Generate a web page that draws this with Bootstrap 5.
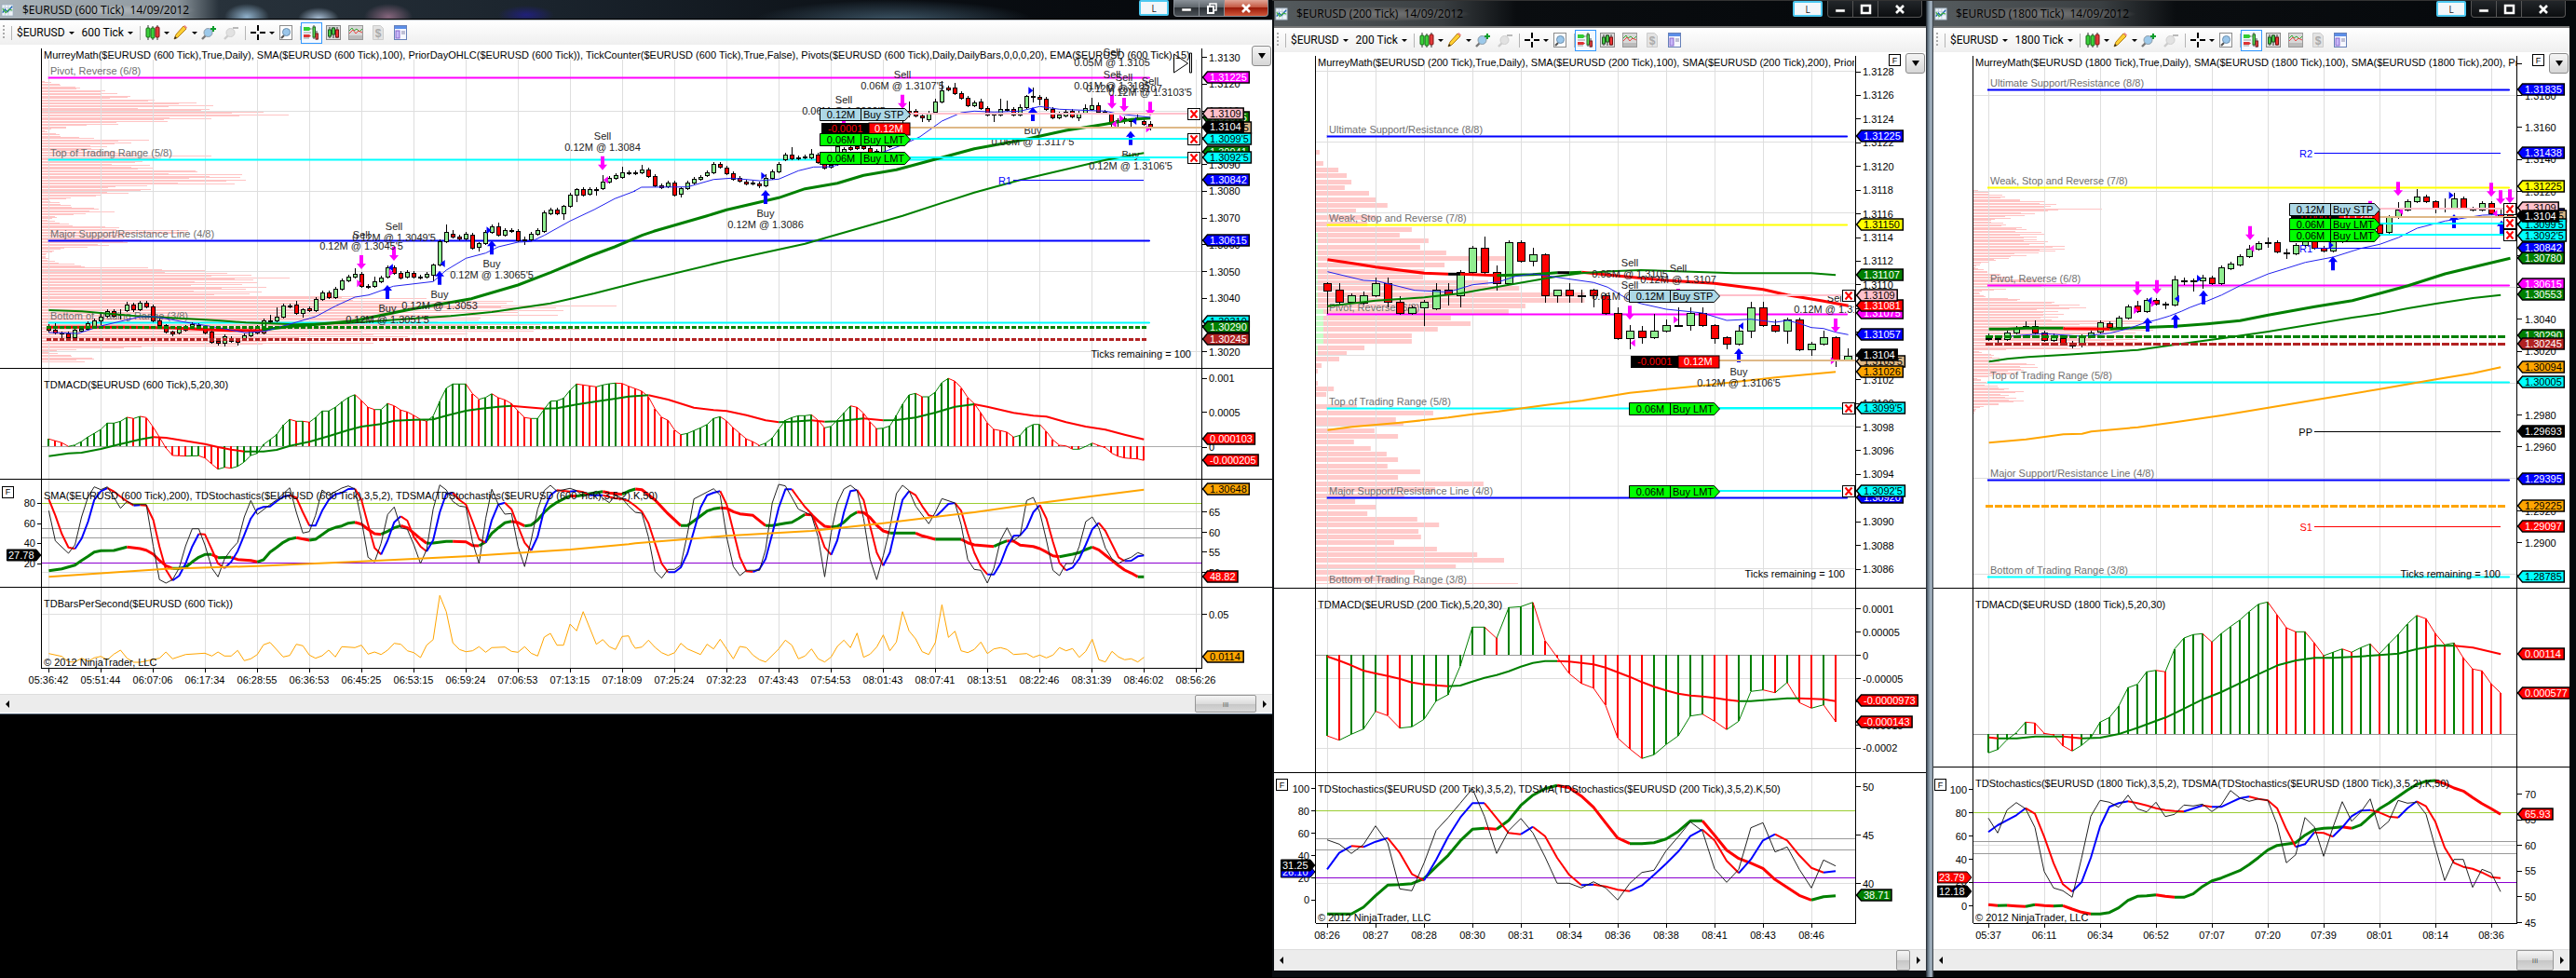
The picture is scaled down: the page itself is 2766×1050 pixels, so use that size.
<!DOCTYPE html>
<html lang="en">
<head>
<meta charset="utf-8">
<meta name="viewport" content="width=device-width, initial-scale=1">
<title>$EURUSD charts</title>
<link rel="stylesheet" href="https://cdn.jsdelivr.net/npm/bootstrap@5.3.0/dist/css/bootstrap.min.css">
<script src="https://cdn.jsdelivr.net/npm/bootstrap@5.3.0/dist/js/bootstrap.bundle.min.js"></script>
<style>
body{background:#000;font-family:"Open Sans",sans-serif;font-size:12px;line-height:16px;color:#000}
.desk{grid-template-columns:1366fr 702fr 698fr}
.win{min-width:0;background:#000}
.win-b{padding:0 0 7px 2px;border-top:1px solid #333;background:#0b0e11}
.win-c{padding:0 7px 7px 8px;border-top:1px solid #333;background:linear-gradient(90deg,#1b2025 0,#5f6f7d 2px,#8fa0ad 4px,#aebccb 6px,#20262b 8px,#05080a 9px,#05080a 100%)}
.titlebar{height:29px;background:linear-gradient(90deg,#555b5e 0,#3a3f42 180px,#0a0d10 260px,#05080b 100%);border-bottom:2px solid #777}
.win-a .titlebar{height:22px;border-bottom:1px solid #b5bbc2;box-shadow:inset 0 -1px #000;background:
 radial-gradient(ellipse 24px 14px at 265px 18px,#8fb0ca,transparent),
 radial-gradient(ellipse 22px 12px at 342px 20px,#a9bfd6,transparent),
 radial-gradient(ellipse 26px 14px at 417px 18px,#85657c,transparent),
 radial-gradient(ellipse 30px 10px at 565px 16px,#20207a,transparent),
 radial-gradient(ellipse 150px 22px at 960px 22px,#3d5566,transparent),
 linear-gradient(90deg,#aab4bb 0,#8d979e 190px,#28323b 235px,#1a232c 600px,#0a0e13 1000px,#05070a 100%)}
.caption{font-size:12px;padding:0 8px;white-space:pre;background:radial-gradient(closest-side,rgba(190,195,198,.75),rgba(150,155,158,.45) 75%,transparent)}
.win-b .caption,.win-c .caption{background:radial-gradient(closest-side,rgba(125,125,125,.9),rgba(95,95,95,.7) 75%,transparent)}
.ctl{border:1px solid #8a9097;border-top:0;height:18px;padding:0;display:flex;align-items:center;justify-content:center;background:linear-gradient(#8b9299,#5c6369 48%,#2b3035 50%,#4a5056);color:#fff}
.win-b .ctl,.win-c .ctl{background:linear-gradient(#22262a,#0c0e10);border-color:#555}
.ctl svg{width:16px;height:12px}
.ctl-min{width:28px;border-radius:0 0 0 4px}
.ctl-max{width:27px;border-left:0}
.ctl-x{width:47px;border-left:0;border-radius:0 0 4px 0}
.win-a .ctl-x{background:linear-gradient(#e0a596,#c4553f 48%,#9b1c0a 50%,#d0563a)}
.win .titlebar .ctl-l{width:32px;height:17px;background:#f3f7fa;border:2px solid #4cc8f0;border-radius:2px;color:#222;font-size:10px;margin-right:5px}
.toolbar{height:26px;background:linear-gradient(#fff,#efefef);padding-left:3px}
.toolbar button{border:0;background:none;padding:0;display:flex;align-items:center;height:22px;color:#000;font-size:12px;white-space:nowrap;font-family:Roboto,"Open Sans",sans-serif}
.toolbar svg.ico{width:16px;height:16px;display:block}
.toolbar .caret{width:0;height:0;border:3px solid transparent;border-top-color:#000;border-bottom:0;margin:1px 0 0 4px}
.toolbar .rule{width:1px;height:15px;background:#b5b5b5;margin:0 5px 0 7px}
.toolbar .grip{width:2px;height:16px;background:repeating-linear-gradient(#aaa 0 2px,transparent 2px 4px)}
.toolbar .picked{border:1px solid #3399ff;background:#f4f9ff;width:23px;height:23px;justify-content:center}
.chart{background:#fff;position:relative}
.chart svg.plot{display:block;width:100%;height:auto;font-family:"Liberation Sans",Arial,sans-serif;font-size:11px}
.chart-menu{position:absolute;top:1px;right:1px;width:21px;height:22px;border:1px solid #8a8a8a;border-radius:3px;background:linear-gradient(#f4f4f4,#d6d6d6);padding:0;display:flex;align-items:center;justify-content:center}
.chart-menu i{border:4px solid transparent;border-top:6px solid #000;border-bottom:0}
.fix-axis{position:absolute;width:13px;height:13px;border:1px solid #000;background:#fff;padding:0;font:9px/10px "Liberation Sans",Arial,sans-serif;color:#000}
.fix-a{top:68%;left:2px}
.fix-top{top:2px;right:27px}
.fix-b{top:81%;left:2px}
.fix-c{top:81%;left:1px}
.scroller{height:23px;background:#ececec;border-top:1px solid #ddd}
.win-a .scroller{height:21px;border-bottom:1px solid #fff}
.scroller button{border:0;background:none;padding:0}
.scroller .arrow{width:17px;color:#333}
.scroller .arrow svg{width:5px;height:8px;display:block;margin:0 auto}
.scroller .thumb{border:1px solid #979797;border-radius:2px;background:linear-gradient(#f5f5f5,#dcdcdc 50%,#c6c6c6 52%,#d9d9d9);color:#555;font-size:8px;line-height:10px}
.thumb-wide{width:66px}.thumb-mid{width:40px}.thumb-slim{width:15px}
.foot-edge{height:2px;background:#000;border-top:1px solid #5d6f82}
</style>
</head>
<body>
<svg width="0" height="0" class="position-absolute" aria-hidden="true">
 <defs>
  <symbol id="i-app" viewBox="0 0 16 16"><rect x="1" y="1" width="14" height="14" fill="#eef3f8" stroke="#9ab"/><path d="M1 5h14M1 9h14M5 1v14M9 1v14" stroke="#bccbd8"/><path d="M2 11l3-4 3 3 6-7" fill="none" stroke="#1c62b5" stroke-width="1.6"/><path d="M2 6l4 5 4-4 4 1" fill="none" stroke="#3fae3f" stroke-width="1.4"/></symbol>
  <symbol id="i-candles" viewBox="0 0 16 16"><path d="M3 0v16M8 1v15M13 0v16" stroke="#333"/><rect x="1" y="3" width="4" height="10" rx="1" fill="#3bd13b" stroke="#176b17"/><rect x="6" y="3" width="4" height="11" rx="1" fill="#3bd13b" stroke="#176b17"/><rect x="11" y="2" width="4" height="11" rx="1" fill="#e23a3a" stroke="#7d1515"/></symbol>
  <symbol id="i-pencil" viewBox="0 0 16 16"><path d="M1 15l2-5 8-9 3 3-9 9z" fill="#ffcf33" stroke="#b27c12"/><path d="M11 1l3 3 1-1.500-2.500-2.500z" fill="#e88"/><path d="M1 15l1-3 2 2z" fill="#222"/></symbol>
  <symbol id="i-zin" viewBox="0 0 16 16"><path d="M1 15l4-4" stroke="#777" stroke-width="2.400"/><circle cx="7.500" cy="8" r="4.500" fill="#9cc9ea" stroke="#8b9aa6"/><path d="M10 4h6M13 1v6" stroke="#0a9c2a" stroke-width="2"/></symbol>
  <symbol id="i-zout" viewBox="0 0 16 16"><path d="M1 15l4-4" stroke="#ccc" stroke-width="2.400"/><circle cx="7.500" cy="8" r="4.500" fill="#e2e2e2" stroke="#cfcfcf"/><path d="M10 3h6" stroke="#b9b9b9" stroke-width="2"/></symbol>
  <symbol id="i-cross" viewBox="0 0 16 16"><path d="M8 0v6M8 10v6M0 8h6M10 8h6" stroke="#000" stroke-width="2"/></symbol>
  <symbol id="i-lens" viewBox="0 0 16 16"><rect x="1.500" y=".5" width="13" height="15" fill="#fdfdfd" stroke="#8c8c8c"/><path d="M3 14l3-3" stroke="#555" stroke-width="2.200"/><circle cx="8.500" cy="7.500" r="4" fill="#9ac6ea" stroke="#6b8fae"/></symbol>
  <symbol id="i-trader" viewBox="0 0 16 16"><path d="M0 2h6l2 2-2 2H0z" fill="#3c3"/><path d="M0 10h6l2 1.500-2 1.500H0z" fill="#d33"/><path d="M0 8h8M0 14h6M7 4h3" stroke="#999"/><path d="M11 0v15M14 6v10" stroke="#444"/><rect x="10" y="2" width="2.500" height="11" fill="#5d5" stroke="#262"/><rect x="13" y="9" width="2.500" height="6" fill="#e44" stroke="#722"/></symbol>
  <symbol id="i-style" viewBox="0 0 16 16"><rect x=".5" y=".5" width="15" height="15" fill="#ddd" stroke="#888"/><path d="M4 2v12M8 2v12M12 2v12" stroke="#333"/><rect x="2.500" y="5" width="3" height="7" fill="#4c4" stroke="#252"/><rect x="6.500" y="3" width="3" height="7" fill="#4c4" stroke="#252"/><rect x="10.500" y="5" width="3" height="8" fill="#e33" stroke="#711"/></symbol>
  <symbol id="i-ind" viewBox="0 0 16 16"><rect x=".5" y=".5" width="15" height="15" fill="#d8d8d8" stroke="#999"/><path d="M1 6l3-3 2 3 3-2 3 3 3-3" fill="none" stroke="#3a3"/><path d="M1 9l4-4 3 4 3-3 4 2" fill="none" stroke="#e44"/><path d="M1 11h14v4H1z" fill="#bbb"/></symbol>
  <symbol id="i-doc" viewBox="0 0 16 16"><path d="M2.500.5h8l3 3v12h-11z" fill="#e3e3e3" stroke="#ccc"/><text x="8" y="13" font-size="12" font-weight="700" text-anchor="middle" fill="#aaa" font-family="Liberation Sans">$</text></symbol>
  <symbol id="i-props" viewBox="0 0 16 16"><rect x="1.500" y=".5" width="13" height="15" fill="#f6f8ff" stroke="#6680b8"/><rect x="2" y="1" width="12" height="3" fill="#5c8ee8"/><rect x="3" y="6" width="4" height="8" fill="#c8b8f8" stroke="#86c"/><path d="M9 7h4M9 9h4" stroke="#88a"/></symbol>
  <symbol id="i-min" viewBox="0 0 16 12"><rect x="3" y="6" width="10" height="3" fill="#fff" stroke="#444" stroke-width=".5"/></symbol>
  <symbol id="i-restore" viewBox="0 0 16 12"><path d="M6 4V1h7v7h-3" fill="none" stroke="#fff" stroke-width="1.500"/><rect x="4" y="4" width="6" height="7" fill="none" stroke="#fff" stroke-width="2"/></symbol>
  <symbol id="i-max" viewBox="0 0 16 12"><rect x="4" y="2" width="9" height="8" fill="none" stroke="#fff" stroke-width="2.500"/></symbol>
  <symbol id="i-x" viewBox="0 0 16 12"><path d="M4 2l8 8M12 2l-8 8" stroke="#fff" stroke-width="2.600"/></symbol>
 </defs>
</svg>

<main class="desk d-grid align-items-start">
 <section class="win win-a" data-caption="$EURUSD (600 Tick)  14/09/2012" data-period="600 Tick" data-max="restore">
  <div class="chart"><svg class="plot" id="c600" viewBox="0 48 1366 697" role="img" aria-label="EURUSD 600 tick chart"></svg>
   <button class="chart-menu" type="button" aria-label="Chart menu"><i></i></button>
   <button class="fix-axis fix-a" type="button">F</button></div>
  <div class="scroller d-flex align-items-stretch"><button class="arrow" type="button" aria-label="Scroll left"><svg viewBox="0 0 5 8"><path d="M4 0v8L0 4z"/></svg></button><div class="flex-grow-1"></div><button class="thumb thumb-wide" type="button">III</button><button class="arrow" type="button" aria-label="Scroll right"><svg viewBox="0 0 5 8"><path d="M1 0v8l4-4z"/></svg></button></div>
  <div class="foot-edge"></div>
 </section>
 <section class="win win-b" data-caption="$EURUSD (200 Tick)  14/09/2012" data-period="200 Tick" data-max="max">
  <div class="chart"><svg class="plot" id="c200" viewBox="1368 56 700 963" role="img" aria-label="EURUSD 200 tick chart"></svg>
   <button class="chart-menu" type="button" aria-label="Chart menu"><i></i></button>
   <button class="fix-axis fix-top" type="button">F</button><button class="fix-axis fix-b" type="button">F</button></div>
  <div class="scroller d-flex align-items-stretch"><button class="arrow" type="button" aria-label="Scroll left"><svg viewBox="0 0 5 8"><path d="M4 0v8L0 4z"/></svg></button><div class="flex-grow-1"></div><button class="thumb thumb-slim" type="button" aria-label="Scroll position"></button><button class="arrow" type="button" aria-label="Scroll right"><svg viewBox="0 0 5 8"><path d="M1 0v8l4-4z"/></svg></button></div>
 </section>
 <section class="win win-c" data-caption="$EURUSD (1800 Tick)  14/09/2012" data-period="1800 Tick" data-max="max">
  <div class="chart"><svg class="plot" id="c1800" viewBox="2076 56 683 963" role="img" aria-label="EURUSD 1800 tick chart"></svg>
   <button class="chart-menu" type="button" aria-label="Chart menu"><i></i></button>
   <button class="fix-axis fix-top" type="button">F</button><button class="fix-axis fix-c" type="button">F</button></div>
  <div class="scroller d-flex align-items-stretch"><button class="arrow" type="button" aria-label="Scroll left"><svg viewBox="0 0 5 8"><path d="M4 0v8L0 4z"/></svg></button><div class="flex-grow-1"></div><button class="thumb thumb-mid" type="button">III</button><button class="arrow" type="button" aria-label="Scroll right"><svg viewBox="0 0 5 8"><path d="M1 0v8l4-4z"/></svg></button></div>
 </section>
</main>

<script>
/* ---- window chrome ---- */
const ico = n => `<svg class="ico" aria-hidden="true"><use href="#i-${n}"/></svg>`;
const tool = (n, label, cls = '', caret = '') => `<button type="button" class="${cls}" aria-label="${label}">${ico(n)}${caret}</button>`;
const CARET = '<span class="caret"></span>', RULE = '<span class="rule"></span>';
document.querySelectorAll('.win').forEach(w => {
  const d = w.dataset;
  w.insertAdjacentHTML('afterbegin', `
  <header class="titlebar d-flex align-items-center">
    <svg width="16" height="14" aria-hidden="true"><use href="#i-app"/></svg><span class="caption">${d.caption}</span>
    <div class="d-flex align-self-start ms-auto me-1"><button type="button" class="ctl ctl-l">L</button>
    <button type="button" class="ctl ctl-min" aria-label="Minimise"><svg><use href="#i-min"/></svg></button>
    <button type="button" class="ctl ctl-max" aria-label="Maximise"><svg><use href="#i-${d.max}"/></svg></button>
    <button type="button" class="ctl ctl-x" aria-label="Close"><svg><use href="#i-x"/></svg></button></div>
  </header>
  <nav class="toolbar d-flex align-items-center"><span class="grip"></span>${RULE}
    <button type="button" class="me-2">$EURUSD ${CARET}</button><button type="button">${d.period} ${CARET}</button>${RULE}
    ${tool('candles', 'Bar style', 'me-1', CARET)}${tool('pencil', 'Draw', 'me-1', CARET)}${tool('zin', 'Zoom in', 'me-2')}${tool('zout', 'Zoom out')}${RULE}
    ${tool('cross', 'Cursor', 'me-1', CARET)}${tool('lens', 'Data box')}<span class="rule me-0"></span>
    ${tool('trader', 'Chart trader', 'picked me-1')}${tool('style', 'Data series', 'me-2')}${tool('ind', 'Indicators', 'me-2')}${tool('doc', 'Strategies', 'me-2')}${tool('props', 'Properties')}
  </nav>`);
});

/* ---- drawing helpers: samples are stored on a fine grid, X per `k`, Y in thirds ---- */
const r1 = n => Math.round(n * 10) / 10, half = n => Math.round(n - .5) + .5;
const at = (s, ox, k, oy) => s.trim().split(/\s+/).map(p => { const [x, y] = p.split(','); return [ox + x / k, oy + y / 3]; });
const seq = (a, x0, dx, oy) => a.map((y, i) => [x0 + i * dx, oy + y / 3]);
const line = (p, c, w) => `<polyline points="${p.map(q => r1(q[0]) + ',' + r1(q[1])).join(' ')}" fill="none" stroke="${c}" stroke-width="${w}" stroke-linejoin="round"/>`;
function trend(p, up, down, w, flat = up) {
  let out = '', i = 0;
  const c = j => { const d = p[j + 1][1] - p[j][1]; return Math.abs(d) < .1 ? flat : d < 0 ? up : down; };
  while (i < p.length - 1) { let j = i + 1; while (j < p.length - 1 && c(j) === c(i)) j++; out += line(p.slice(i, j + 1), c(i), w); i = j; }
  return out;
}
const H = (x1, x2, y, c, w = 1, dash = '') => `<path d="M${r1(x1)} ${w % 2 ? half(y) : Math.round(y)}H${r1(x2)}" stroke="${c}" stroke-width="${w}" ${dash ? `stroke-dasharray="${dash}"` : ''} shape-rendering="crispEdges"/>`;
const V = (x, y1, y2, c, w = 1) => `<path d="M${w % 2 ? half(x) : Math.round(x)} ${r1(y1)}V${r1(y2)}" stroke="${c}" stroke-width="${w}" shape-rendering="crispEdges"/>`;
const T = (x, y, s, c = '#000', a = 'start') => `<text x="${Math.round(x)}" y="${Math.round(y + 4)}" fill="${c}" text-anchor="${a}">${s}</text>`;
const murrey = (x1, x2, y, c) => H(x1, x2, y, c, 1).replace('/>', ' />') + `<rect x="${r1(x1)}" y="${half(y) - 1.5}" width="${r1(x2 - x1)}" height="3" fill="${c}" opacity=".5"/>`;
const wide = s => [...s].reduce((n, ch) => n + (ch === '.' ? 3.06 : ch === "'" ? 2.1 : ch === '-' ? 3.66 : 6.12), 0);
function tag(x, y, s, bg, fg = '#fff') {
  const w = wide(s) + 9; x = half(x); y = Math.round(y);
  return `<path d="M${x} ${y}l5-6h${r1(w - 4)}v12h${r1(4 - w)}z" fill="${bg}" stroke="#000" stroke-width="1.500"/>` + T(x + 7, y, s, fg);
}
function ltag(x, y, s, bg) {
  const w = wide(s) + 8; y = Math.round(y);
  return `<path d="M${x} ${y}l-5-6h${-(w - 4)}v12h${w - 4}z" fill="${bg}" stroke="#000"/>` + T(x - w + 1, y, s, '#fff');
}
function order(x, y, q, kind, bg) {
  y = Math.round(y); x = Math.round(x) + .5;
  return `<path d="M${x - 97} ${y - 6.5}h91l6 6.500l-6 6.500h-91z" fill="${bg}" stroke="#000"/><path d="M${x - 53} ${y - 6.5}v13" stroke="#000"/>` + T(x - 75, y, q, '#000', 'middle') + T(x - 51, y, kind);
}
const pnl = (x, y) => { y = Math.round(y); x = Math.round(x); return `<rect x="${x - 95}" y="${y - 6}" width="51" height="13"/><rect x="${x - 44}" y="${y - 6}" width="44" height="13" fill="#f00" stroke="#000"/>` + T(x - 88, y, '-0.0001', '#f00') + T(x - 38, y, '0.12M', '#fff'); };
const kill = (x, y) => { x = half(x); y = half(y); return `<rect x="${x - 6}" y="${y - 6}" width="13" height="12" fill="#fff" stroke="#000"/><path d="M${x - 3} ${y - 4}l7 8M${x + 4} ${y - 4}l-7 8" stroke="#f00" stroke-width="2"/>`; };
const MAG = '#f0f', BLU = '#00f', GRN = 'green', RED = '#f00', CYN = '#0ff', ORG = 'orange', GRID = '#dedede';
function arrow(x, y, down) {
  x = Math.round(x); const c = down ? MAG : BLU;
  return down ? `<path d="M${x - 2} ${y}h4v9h3l-5 6l-5-6h3z" fill="${c}"/>` : `<path d="M${x - 2} ${y + 15}h4v-9h3l-5-6l-5 6h3z" fill="${c}"/>`;
}
const sell = (x, y, s) => arrow(x, y, true) + T(x, y - 22, 'Sell', '#222', 'middle') + T(x, y - 10, s, '#222', 'middle');
const buy = (x, y, s) => arrow(x, y, false) + T(x, y + 25, 'Buy', '#222', 'middle') + T(x, y + 37, s, '#222', 'middle');
const tri = (x, y, c, right) => `<path d="M${r1(x + (right ? -2.5 : 2.5))} ${r1(y - 4)}v8l${right ? 5 : -5}-4z" fill="${c}"/>`;
function candles(s, x0, dx, bw, first = 0) {
  return s.trim().split(/\s+/).map((t, i) => {
    const n = t.slice(1).split(',').map(Number), x = half(x0 + (i + first) * dx);
    const top = Math.round(n[0] / 3), bot = Math.max(top + 1, Math.round(n[1] / 3));
    const hi = r1((n[2] || n[0] - 6) / 3), lo = r1((n[3] || n[1] + 6) / 3);
    return `<path d="M${x} ${hi}V${lo}" stroke="#000" shape-rendering="crispEdges"/><rect x="${x - bw / 2}" y="${top + .5}" width="${bw}" height="${bot - top}" fill="${t[0] === 'g' ? '#90ee90' : RED}" stroke="#000" shape-rendering="crispEdges"/>`;
  }).join('');
}
function hist(p, zero, w, x0, dx, n) {
  let out = '', k = 0, prev = p[0][1];
  for (let i = 0; i < n; i++) {
    const x = x0 + i * dx; while (k < p.length - 2 && p[k + 1][0] < x - .3) k++;
    const a = p[k], b = p[k + 1], f = Math.min(1, Math.max(0, (x - a[0]) / (b[0] - a[0]))), y = a[1] + (b[1] - a[1]) * f;
    out += V(x, zero, y, y <= prev + .05 ? GRN : RED, w); prev = y;
  }
  return out + trend(p, GRN, RED, 1);
}
/* volume profile: envelope of (Y, X) pairs, drawn as thin rows */
function profile(s, ox, k, left) {
  const e = s.trim().split(/\s+/).map(p => p.split(',').map(Number)); let out = '', j = 0, n = 0;
  for (let y = e[0][0]; y < e[e.length - 1][0]; y += 4.3, n++) {
    while (e[j + 1][0] < y) j++;
    const f = (y - e[j][0]) / (e[j + 1][0] - e[j][0]), x = ox + (e[j][1] + (e[j + 1][1] - e[j][1]) * f) / k;
    const w = (x - left) * [1, .82, .95, .7, .97, .88, .65][n % 7];
    out += `M${left} ${half(y / 3)}h${r1(w)}`;
  }
  return `<path d="${out}" stroke="#ffc4c4" shape-rendering="crispEdges"/>`;
}
const times = (a, x0, dx, y, top) => a.map((t, i) => V(x0 + i * dx, y, y + 5, '#000') + T(x0 + i * dx, y + 13, t, '#000', 'middle')).join('');

/* ---- 600 tick ---- */
(() => {
  const k = 2.2725, L = 44.5, R = 1290.5, X = x => x / k, X2 = x => 680 + x / k, Y = y => y / 3, P = y => 390 + y / 3;
  const two = (a, b, oy) => at(a, 0, k, oy).concat(at(b, 680, k, oy));
  let o = '<clipPath id="clipA"><rect x="44" y="48" width="1246" height="680"/></clipPath>';
  o += profile('262,110 280,190 297,283 316,348 325,390 336,595 345,430 355,540 366,783 375,630 384,490 392,415 404,225 420,105 434,150 445,205 452,400 460,325 475,250 488,250 502,527 515,350 529,365 540,370 552,510 559,580 573,615 592,613 601,285 612,392 620,340 632,240 645,120 660,165 674,255 682,295 695,150 710,120 724,180 737,340 748,540 760,320 777,350 790,280 803,150 820,110 840,120 858,225 871,520 880,535 888,750 905,630 919,665 935,620 948,690 957,960 967,1180 977,1420 985,1510 995,1400 1010,1430 1025,1200 1038,1200 1050,1420 1066,1470 1075,1130 1092,950 1104,940 1118,440 1125,210 1135,120 1150,220 1157,250 1168,190', 0, k, 45);
  for (let i = 0; i < 23; i++) o += V(52 + i * 56, 64, 717, GRID);
  [358, 617, 875, 1133].forEach(y => o += H(L, R, Y(y), GRID));
  o += H(L, R, P(268), '#aaa') + H(L, R, P(478), GRID) + H(L, R, P(673), GRID) + H(L, R, P(808), GRID) + H(L, R, P(532), '#999') + H(L, R, P(562), '#999') + H(L, R, P(451), '#9acd32') + H(L, R, P(643), '#8b00d0');
  [['Pivot, Reverse (6/8)', 229, 250, MAG], ['Top of Trading Range (5/8)', 493, 514, CYN], ['Major Support/Resistance Line (4/8)', 754, 775, BLU], ['Bottom of Trading Range (3/8)', 1018, 1039, CYN]].forEach(m => o += murrey(X(117), X2(1260), Y(m[2]), m[3]) + T(X(123), Y(m[1]), m[0], '#707070'));
  o += candles(`r1053,1063,1045,1070 r1062,1071,1042,1076 r1070,1074,1068,1088 r1074,1085 g1063,1085 g1058,1064 g1042,1060 g1033,1052 g1020,1033,1012,1046 g1001,1016 r1001,1018 g1010,1014,997,1030 g982,1000,972 r982,995,975,1005 g976,995 r976,986 r986,1031 r1032,1046 r1048,1068,1043,1075 r1068,1073,1066,1082
  g1060,1072 g1052,1062 g1045,1050 r1048,1056 r1055,1072 r1068,1100 r1098,1105,1094,1112 g1082,1105,1078,1115 r1088,1098 r1095,1100,1090,1112 g1080,1090 g1066,1081 g1052,1072 g1033,1072 r1031,1034,1015,1045 g1020,1031,990 g985,1020 r983,987 r982,1007,970 g995,1008,992,1022
  r993,1000 g964,1000 g943,964 r943,956 g931,957 g904,931 g892,904 g882,891,865 r883,922 r921,923 g907,921,890 g894,907 g862,892,855 r862,878 r878,893 g877,892 r878,892 r890,893 g882,892 g853,884,849,905
  g778,852 g747,778,724 r754,763,741 r763,768 g754,768 r755,797 g784,796,780,810 g748,784 g728,748 r728,755,718 g741,755 r741,745 r745,773 r770,774,762,788 g754,772 g741,754 g685,743 g676,688 r676,688 g664,688,660,707
  g626,664 g610,626,605,650 r610,626 g610,625 r609,612,602,630 g586,607,565 g574,586 g565,574 g556,569,536 r556,559 r556,559 g547,556,532 r547,566 r566,598 r596,604 g587,600 r589,626 g607,625,604,635 g589,606 g577,588
  g570,577 g556,565 g528,556 r529,538 r539,559 r559,575 r574,582 r584,590 r588,591 r590,597,585,606 g574,596,560 g551,574 g527,551 g499,513 r499,509,475 r506,509 r505,508 g494,507,480 r497,522 r520,540
  g530,538 g470,528 g480,500 r475,480 r470,478 r470,478 r477,490 r487,492 g466,490 g440,470 g420,440 g395,420 r357,362,328,378 r358,372 r373,378,368,392 g362,383,358,392 g328,361,318 g290,328,262 r283,288,275 r283,301,268
  r301,314 r314,340 g329,340 r328,348,318 r349,368 r367,370,365,392 g350,368,318 r350,353,325 r352,370,344 g345,370,335 g310,345,305 r308,310,282,330 r313,319,306,340 r319,352 r352,377 g370,377,360 g359,371 r358,376 g362,377,358,390 g348,362,335
  g340,350,315 r340,360,330 r360,364 r367,400,363,408 r388,392,380,408 r380,384,375,400 g386,388,380,408 r378,382,368 r390,400 r400,410,390,420`, 52, 7, 4);
  o += line(at('119,1054 300,1054 420,1056 500,1061 560,1064 650,1065', 0, k, 0), RED, 3);
  o += line(two('640,1063 700,1052 755,1047 860,1034 1000,997 1150,962 1264,918 1343,878 1439,825 1500,795 1568,757', '50,745 180,695 228,676 355,637 419,608 498,590 562,565 642,547 737,513 832,479 944,452 1056,420 1152,400 1215,385 1262,380', 0), GRN, 3);
  o += line(two('119,999 200,1003 330,1018 450,1026 530,1032 600,1039 720,1045 850,1040 1000,1027 1100,1018 1200,1005 1343,977 1450,945 1568,905', '228,840 419,785 498,755 657,695 832,620 944,580 1056,545 1152,515 1246,493', 0), GRN, 2);
  o += line(two('119,1071 190,1074 246,1050 342,1020 380,1020 453,1038 532,1055 600,1072 650,1066 691,1050 770,1020 820,985 866,957 900,950 960,922 1057,907 1089,870 1137,832 1185,815 1216,795 1264,780 1296,778 1328,758 1391,712 1450,675 1500,640 1550,615', '0,617 20,603 132,602 196,578 240,574 308,582 355,577 403,550 440,538 483,537 610,490 660,465 700,440 753,390 800,363 832,358 880,361 944,358 992,343 1040,352 1152,358 1184,367 1262,378', 0), '#2222ee', 1);
  o += H(X(114), X2(1252), Y(1054), GRN, 3, '5 2') + H(X(114), X2(1252), Y(1093), '#b22222', 3, '5 2');
  o += H(X2(928), X2(1246), Y(580), BLU) + T(X2(891), Y(582), 'R1', BLU);
  [[1471, 503, '0.12M @ 1.3084'], [962, 795, "0.12M @ 1.3049'5"], [882, 822, "0.12M @ 1.3045'5"]].forEach(a => o += sell(X(a[0]), Y(a[1]), a[2]));
  [[514, 387, "0.06M @ 1.3099'5"], [657, 305, "0.06M @ 1.3107'5"], [1167, 305, '0.01M @ 1.3105'], [1198, 315, '0.12M @ 1.3107'], [1262, 328, "0.12M @ 1.3103'5"]].forEach(a => o += sell(X2(a[0]), Y(a[1]), a[2]));
  o += T(X2(1167), Y(167), 'Sell', '#222', 'middle') + T(X2(1167), Y(202), '0.05M @ 1.3105', '#222', 'middle');
  [[1200, 775, "0.12M @ 1.3065'5"], [1073, 872, '0.12M @ 1.3053'], [946, 918, "0.12M @ 1.3051'5"]].forEach(a => o += buy(X(a[0]), Y(a[1]), a[2]));
  [[323, 612, '0.12M @ 1.3086'], [975, 345, "0.06M @ 1.3117'5"], [1214, 422, "0.12M @ 1.3106'5"]].forEach(a => o += buy(X2(a[0]), Y(a[1]), a[2]));
  [[1478, 580, MAG, 0], [877, 913, MAG, 1], [953, 862, BLU, 0], [955, 878, MAG, 1], [1080, 849, BLU, 0], [1193, 742, BLU, 1]].forEach(a => o += tri(X(a[0]), Y(a[1]), a[2], a[3]));
  [[318, 566, BLU, 1], [970, 292, BLU, 1], [1173, 400, MAG, 0], [1192, 382, MAG, 1], [1222, 390, BLU, 0], [1257, 415, MAG, 1]].forEach(a => o += tri(X2(a[0]), Y(a[1]), a[2], a[3]));
  o += H(977, 1275, Y(366), '#ffc0cb', 2) + H(977, 1290, Y(411), '#deb887', 2) + H(977, 1275, Y(447), CYN, 2) + H(977, 1275, Y(507), CYN, 2);
  o += pnl(977, Y(413)) + order(977, Y(369), '0.12M', 'Buy STP', '#add8e6') + order(977, Y(451), '0.06M', 'Buy LMT', '#0f0') + order(977, Y(511), '0.06M', 'Buy LMT', '#0f0');
  [366, 447, 507].forEach(y => o += kill(1281, Y(y)));
  o += `<g clip-path="url(#clipA)">${T(47, 59, 'MurreyMath($EURUSD (600 Tick),True,Daily), SMA($EURUSD (600 Tick),100), PriorDayOHLC($EURUSD (600 Tick)), TickCounter($EURUSD (600 Tick),True,False), Pivots($EURUSD (600 Tick),Daily,DailyBars,0,0,0,20), EMA($EURUSD (600 Tick),15)')}</g>`;
  o += '<path d="M1260.500 58v20l15-10zM1277.500 57v21h2v-21z" fill="none" stroke="#000"/>';
  o += T(X2(1362), Y(1141), 'Ticks remaining = 100', '#000', 'end');
  /* lower panels */
  o += hist(two('119,244 135,250 151,256 167,268 183,263 199,252 215,237 230,226 246,213 262,193 278,193 294,187 310,174 326,178 342,171 357,175 374,206 389,238 405,273 421,297 437,298 453,299 485,298 500,305 517,325 532,341 548,335 564,338 580,332 596,318 612,297 628,290 643,262 659,246 675,230 691,200 707,181 723,187 739,187 755,190 770,175 786,154 802,154 818,142 834,125 850,110 866,101 882,120 898,142 914,149 930,149 946,130 962,137 978,151 994,157 1010,168 1026,181 1041,187 1057,170 1073,122 1089,80 1105,67 1121,67 1137,67 1153,98 1169,116 1185,110 1200,98 1216,111 1232,118 1248,130 1264,154 1280,175 1296,178 1312,178 1328,148 1343,122 1359,121 1375,113 1391,87 1407,67 1423,70 1439,73 1455,76 1471,70 1487,66 1502,64 1518,65 1534,74',
    '5,82 21,90 37,108 53,147 69,174 85,184 101,215 116,230 132,226 148,217 164,208 180,197 196,178 212,172 228,186 244,208 260,226 276,244 292,253 308,265 323,257 339,241 355,212 371,184 387,175 403,169 419,169 435,166 451,184 467,208 483,203 498,183 514,160 530,137 546,142 562,161 578,189 594,211 610,209 626,202 642,168 657,132 673,102 689,97 705,108 721,108 737,93 753,62 769,49 785,58 800,78 816,110 832,130 848,160 864,192 880,213 896,217 912,222 928,238 944,232 960,208 976,197 992,197 1008,220 1024,247 1040,264 1056,266 1072,277 1088,277 1104,268 1120,257 1136,265 1152,272 1168,290 1184,300 1199,305 1215,307 1231,308 1246,313', 390), P(268), 2, 52.4, 7, 169);
  o += trend(two('119,299 167,290 199,288 246,276 294,260 342,245 374,238 405,240 500,260 532,270 564,278 596,284 643,284 675,279 707,266 755,253 802,235 850,215 882,204 930,196 962,185 1010,182 1057,181 1089,169 1137,153 1169,147 1216,140 1248,137 1280,141 1328,146 1359,145 1407,133 1455,123 1502,114 1534,107', '5,106 37,103 85,117 148,143 196,151 228,154 276,167 323,184 355,190 387,188 435,184 467,188 498,187 562,178 610,184 642,183 689,175 737,159 785,140 832,132 864,140 896,150 928,160 976,169 1008,172 1056,190 1104,204 1152,214 1199,230 1246,245', 390), GRN, RED, 2);
  o += trend(two('119,668 151,662 183,650 199,635 215,622 230,608 246,604 278,603 310,592 342,597 357,602 374,615 389,635 405,652 421,661 437,661 453,657 469,640 485,625 500,616 517,616 532,626 564,625 580,632 612,635 628,640 643,633 659,608 675,593 691,577 707,566 723,562 755,570 770,567 786,552 802,537 818,529 834,524 850,515 866,512 882,518 898,535 914,549 930,551 946,541 962,530 978,523 994,530 1010,547 1026,565 1041,580 1057,579 1089,574 1105,574 1137,575 1153,587 1169,588 1185,575 1200,548 1216,530 1232,514 1248,509 1264,513 1280,524 1296,521 1312,505 1328,480 1343,462 1359,448 1375,437 1391,427 1407,428 1439,420 1471,413 1487,418 1518,422 1534,412', '5,405 21,407 53,440 85,485 116,523 132,523 148,508 164,492 180,476 196,469 212,466 228,467 244,478 260,485 292,490 323,523 339,523 371,515 387,512 403,500 419,487 435,488 451,508 467,525 483,528 498,525 514,512 530,492 546,479 562,481 578,497 594,522 610,540 626,547 689,547 705,556 737,567 800,567 816,578 832,585 880,590 896,580 912,572 928,573 944,586 976,590 992,597 1008,608 1024,620 1040,623 1072,615 1088,610 1104,600 1120,592 1136,601 1152,618 1168,635 1184,652 1199,666 1215,676 1231,688 1246,688', 390), GRN, RED, 3);
  o += trend(two('119,438 135,490 151,550 167,593 183,598 199,565 215,510 230,440 246,412 262,402 278,413 294,430 310,445 326,458 342,457 357,458 374,505 389,590 405,665 421,700 437,685 453,645 469,590 485,550 500,551 517,600 532,645 548,660 564,640 580,605 596,553 612,500 628,470 643,463 659,461 675,445 691,430 707,425 723,433 739,480 755,523 770,523 786,475 802,440 818,422 834,417 850,405 866,404 882,440 898,520 914,595 930,616 946,570 962,512 978,493 994,507 1010,560 1026,590 1041,606 1057,570 1073,480 1089,420 1105,418 1121,440 1137,455 1153,510 1169,567 1185,578 1200,505 1216,455 1232,449 1248,470 1264,525 1280,578 1296,603 1312,558 1328,470 1343,425 1359,409 1391,413 1407,411 1423,415 1439,425 1471,425 1502,435 1518,437 1534,444', '5,460 21,478 37,515 53,580 69,645 85,673 101,673 116,658 132,613 148,540 164,465 180,425 196,417 212,412 228,455 244,540 260,625 276,670 292,672 308,663 323,630 339,550 355,465 371,406 387,406 403,435 419,463 435,485 451,535 467,593 483,617 498,570 514,480 530,412 546,408 562,440 578,525 594,610 610,652 626,610 642,520 657,440 673,412 689,425 705,460 721,490 737,495 753,475 769,453 785,450 800,475 816,547 832,610 848,655 864,680 880,680 896,645 912,590 928,556 944,554 960,530 976,480 992,457 1008,500 1024,575 1040,643 1056,667 1072,658 1088,630 1104,585 1120,535 1136,514 1152,540 1168,583 1184,625 1199,637 1215,636 1231,622 1246,619', 390), BLU, RED, 2);
  o += line(two('119,475 135,572 167,612 183,585 199,495 215,430 230,398 246,407 262,398 278,432 294,467 310,445 326,455 357,455 374,590 389,697 405,708 421,697 437,660 453,588 469,533 485,533 500,585 517,660 532,688 548,630 564,600 580,577 596,495 612,442 628,487 659,455 675,440 707,401 723,480 739,547 755,542 770,490 786,408 802,425 834,402 850,395 866,405 882,505 898,625 914,640 930,580 946,487 962,463 978,530 994,535 1010,585 1026,645 1041,600 1057,470 1073,392 1089,408 1105,445 1121,460 1137,463 1153,575 1169,645 1185,500 1200,406 1216,455 1232,486 1248,484 1264,590 1280,655 1296,570 1312,470 1328,410 1343,393 1359,412 1391,403 1407,410 1423,430 1455,412 1471,435 1487,449 1502,425 1518,435 1534,460', '5,480 21,483 37,560 53,670 69,692 85,664 101,664 116,650 132,550 148,437 180,415 196,404 212,425 228,560 244,655 260,684 276,667 308,667 323,600 339,450 355,390 371,395 403,470 435,490 451,560 467,688 483,545 498,450 514,405 530,393 546,410 562,500 578,632 594,697 610,620 626,530 642,420 657,393 673,410 689,460 721,517 737,480 753,436 785,450 800,520 816,632 832,664 848,667 864,708 880,660 896,570 912,530 928,572 944,555 960,442 976,432 992,480 1008,570 1024,667 1040,684 1056,645 1072,645 1088,590 1104,510 1120,495 1136,530 1152,595 1168,630 1184,645 1199,633 1215,625 1231,610 1246,617', 390), '#222', 1);
  o += line(two('119,688 405,662 628,653 882,638 1137,622 1392,600 1534,583', '5,580 228,556 435,540 610,515 832,480 992,450 1120,428 1246,407', 390), ORG, 2);
  o += line(two('119,935 151,944 167,962 183,962 199,950 215,960 230,949 246,944 262,955 278,937 294,924 310,950 326,963 342,963 389,950 405,930 421,952 453,938 500,934 517,943 532,930 548,943 564,943 580,925 596,958 612,952 628,938 643,907 659,899 691,946 707,941 723,905 739,910 755,940 770,950 786,942 802,924 818,946 834,913 866,916 882,908 898,937 914,930 930,938 946,924 962,902 978,905 994,926 1010,932 1026,948 1041,908 1057,890 1073,748 1089,800 1105,900 1121,922 1137,929 1153,926 1169,913 1185,931 1200,916 1232,914 1248,928 1264,931 1280,913 1296,934 1312,943 1328,882 1343,870 1359,908 1375,908 1391,840 1407,862 1423,800 1455,905 1471,890 1487,913 1502,922 1518,880 1534,878 1542,902', '5,918 21,914 37,892 53,915 69,932 85,941 101,932 116,902 132,920 164,938 180,905 196,920 212,889 228,920 244,952 260,912 276,916 292,940 308,955 323,962 355,920 371,892 387,908 403,952 419,943 435,920 451,952 467,962 483,946 498,912 514,892 530,916 546,869 562,947 578,937 594,914 610,875 626,926 642,898 657,800 673,862 689,888 705,929 721,938 737,900 753,778 769,883 785,863 800,926 816,932 832,922 848,898 864,935 880,920 896,916 912,922 928,938 960,935 976,947 992,940 1008,949 1024,940 1040,916 1056,926 1072,919 1088,947 1104,928 1120,889 1136,955 1152,962 1168,928 1184,946 1199,955 1215,952 1231,962 1246,947', 390), ORG, 1);
  o += T(47, P(70), 'TDMACD($EURUSD (600 Tick),5,20,30)') + T(47, P(427), 'SMA($EURUSD (600 Tick),200), TDStochastics($EURUSD (600 Tick),3,5,2), TDSMA(TDStochastics($EURUSD (600 Tick),3,5,2).K,50)') + T(47, P(775), 'TDBarsPerSecond($EURUSD (600 Tick))') + T(47, P(963), '© 2012 NinjaTrader, LLC');
  [395, 514, 630].forEach(y => o += H(0, 1366, y, '#000'));
  o += V(L, 52, 718, '#000') + V(R, 52, 718, '#000') + H(L, R, 717, '#000');
  for (let i = 0; i < 12; i++) { const y = Y(185 + i * 86.2); o += H(R, R + 5, y, '#000') + T(1298, y, (1.313 - i * .001).toFixed(4)); }
  [['0.001', 48], ['0.0005', 158], ['0', 270], ['65', 479], ['60', 545], ['55', 608], ['50', 674], ['0.05', 809]].forEach(a => o += H(R, R + 5, P(a[1]), '#000') + T(1298, P(a[1]), a[0]));
  [['80', 451], ['60', 516], ['40', 580], ['20', 645]].forEach(a => o += H(L - 5, L, P(a[1]), '#000') + T(38, P(a[1]), a[0], '#000', 'end'));
  o += ltag(44, P(617), '27.78', '#000');
  [['1.31225', 248, MAG], ['1.31075', 377, GRN], ["1.3103'5", 411, '#deb887', '#000'], ['1.3109', 365, '#ffc0cb', '#000'], ['1.3104', 409, '#000'], ['1.30941', 490, GRN], ["1.3099'5", 447, CYN, '#000'], ["1.3092'5", 508, CYN, '#000'], ['1.30842', 578, BLU], ['1.30615', 773, BLU], ['1.30310', 1036, CYN, '#000'], ['1.30290', 1053, GRN], ['1.30245', 1092, '#b22222']].forEach(a => o += tag(1291, Y(a[1]), a[0], a[2], a[3]));
  [['0.000103', 243, RED], ['-0.000205', 312, RED], ['1.30648', 405, ORG, '#000'], ['48.82', 688, RED], ['0.0114', 945, ORG, '#000']].forEach(a => o += tag(1291, P(a[1]), a[0], a[2], a[3]));
  o += times('05:36:42 05:51:44 06:07:06 06:17:34 06:28:55 06:36:53 06:45:25 06:53:15 06:59:24 07:06:53 07:13:15 07:18:09 07:25:24 07:32:23 07:43:43 07:54:53 08:01:43 08:07:41 08:13:51 08:22:46 08:31:39 08:46:02 08:56:26'.split(' '), 52, 56, 717);
  document.getElementById('c600').innerHTML = o;
})();

/* ---- 200 tick ---- */
(() => {
  const k = 2.221, ox = 1366, L = 1412.5, R = 1992.5, X = x => ox + x / k, Y = y => y / 3, P = y => 640 + y / 3;
  let o = '<clipPath id="clipB"><rect x="1412" y="56" width="579" height="936"/></clipPath>';
  o += '492,113 529,122 548,158 568,178 588,189 607,173 625,231 645,249 664,275 682,200 702,250 722,227 740,333 759,304 778,373 797,353 816,415 835,565 855,411 875,362 893,360 912,515 931,589 950,745 968,745 988,604 1005,564 1026,426 1045,473 1063,395 1083,333 1101,333 1122,220 1141,178 1159,160 1179,118 1198,109 1236,109 1255,147 1273,129 1312,202 1332,384 1352,295 1369,313 1389,244 1408,300 1426,195 1446,235 1465,273 1483,300 1503,275 1522,353 1540,300 1559,504 1578,389 1598,315 1618,198 1636,247 1656,227 1675,346 1693,398 1713,349 1732,355 1750,291 1770,393 1789,489 1807,553 1827,438 1846,340 1866,300'.split(' ').map((p, i) => { const [y, x] = p.split(','), g = +y > 740 && +y < 1150 ? (+y > 1000 && +y < 1120 ? 8 : 2) : 0; return `<rect x="1413" y="${Math.round(y / 3) - 3}" width="${r1(X(x) - 1413)}" height="5" fill="#ffcaca"/>` + (g ? `<rect x="1413" y="${Math.round(y / 3) - 3}" width="${g}" height="5" fill="#c8ffc8"/>` : ''); }).join('');
  o += H(1413, X(586), Y(1880), '#ffcaca');
  for (let i = 0; i < 11; i++) o += V(1425 + i * 52, 64, 991, GRID);
  [229, 457, 685, 913, 1144, 1372, 1831].forEach(y => o += H(L, R, Y(y), GRID));
  [41, 266, 490, 925].forEach(y => o += H(L, R, P(y), GRID));
  o += H(L, R, P(190), '#999') + H(L, R, P(692), '#9acd32') + H(L, R, P(781), '#999') + H(L, R, P(817), '#999') + H(L, R, P(907), '#8b00d0');
  [['Ultimate Support/Resistance (8/8)', 418, 439, BLU], ['Weak, Stop and Reverse (7/8)', 703, 723, '#ff0'], ['Pivot, Reverse (6/8)', 990, 1012, MAG], ['Top of Trading Range (5/8)', 1293, 1315, CYN], ['Major Support/Resistance Line (4/8)', 1582, 1603, BLU], ['Bottom of Trading Range (3/8)', 1866, 0]].forEach(m => o += (m[2] ? murrey(X(130), X(1372), Y(m[2]), m[3]) : '') + T(X(135), Y(m[1]), m[0], '#707070'));
  o += candles(`r912,935,910,1010 r934,972,912,985 g952,972 g952,975,938 g912,952,895 r912,972,895,990 r972,1009,955 g990,1009 g972,991,965,1050 g934,992,912 r934,947,912,985 g877,952,870,990 g799,877 r799,877,762 r877,913,855,935 g781,913 r781,839 g820,839,798,858 r820,952,815,975 g934,952,932,975 r934,952,912,975 r950,953,934,975 r934,952,930,990 r952,1009 r1009,1088,990 g1066,1088,1048,1125 r1066,1087,1050,1107 g1066,1087,1010 g1048,1066,1030 r1047,1048,990 g1009,1048,990,1066 r1009,1048,990 r1048,1088,1045,1107 r1087,1106,1082,1125 g1066,1106,1048 g991,1066,972,1088 r991,1048,972 r1048,1066,1030 g1030,1066,1024,1107 r1030,1124 g1106,1124,1100,1145 g1087,1106,1066 r1087,1160,1082,1182 g1145,1158,1122`, 1425, 13, 8);
  o += trend(at('132,836 200,850 247,860 363,880 420,883 449,883 536,887 622,884 680,878 709,878 738,877 850,892 940,903 1055,913 1171,932 1229,950 1315,970 1374,985', ox, k, 0), GRN, RED, 3, '#000');
  o += line(at('132,986 247,968 363,958 449,945 565,917 680,890 738,880 820,873 880,870 1000,875 1100,880 1286,880 1344,886', ox, k, 0), GRN, 2);
  o += line(at('132,875 218,903 250,905 340,935 410,940 430,937 478,917 540,908 580,890 622,882 700,897 767,910 800,925 850,965 880,978 940,996 1026,1008 1084,1032 1142,1028 1200,1038 1229,1032 1257,1042 1286,1055 1315,1058 1344,1070 1374,1078', ox, k, 0), '#2222ee', 1);
  o += line(at('132,1385 190,1375 300,1362 420,1345 478,1334 540,1325 650,1305 740,1290 853,1265 940,1253 1026,1242 1200,1216 1344,1198', ox, k, 0), ORG, 2);
  o += '<g clip-path="url(#clipB)">' + T(X(853), Y(847), 'Sell', '#222', 'middle') + T(X(853), Y(883), '0.05M @ 1.3105', '#222', 'middle');
  [[853, 985, '0.01M @ 1.3105'], [969, 930, '0.12M @ 1.3107'], [1344, 1026, "0.12M @ 1.3103'5"]].forEach(a => o += sell(X(a[0]), Y(a[1]), a[2]));
  o += buy(X(1113), Y(1122), "0.12M @ 1.3106'5");
  [[860, 1105, MAG, 0], [963, 1030, MAG, 1], [1118, 1050, BLU, 0], [1338, 1162, MAG, 1]].forEach(a => o += tri(X(a[0]), Y(a[1]), a[2], a[3]));
  o += T(1415, 67, 'MurreyMath($EURUSD (200 Tick),True,Daily), SMA($EURUSD (200 Tick),100), SMA($EURUSD (200 Tick),200), PriorDayOHLC($EURUSD (200 Tick))') + '</g>';
  const t = 1846;
  o += H(t, 1977, Y(950), '#ffc0cb', 2) + H(t, R, Y(1161), '#deb887', 2) + H(t, 1977, Y(1315), CYN, 2) + H(t, 1977, Y(1581), CYN, 2);
  o += pnl(t, Y(1163)) + order(t, Y(954), '0.12M', 'Buy STP', '#add8e6') + order(t, Y(1317), '0.06M', 'Buy LMT', '#0f0') + order(t, Y(1583), '0.06M', 'Buy LMT', '#0f0');
  [951, 1314, 1581].forEach(y => o += kill(1984, Y(y)));
  o += T(1981, 320 + 889 / 3, 'Ticks remaining = 100', '#000', 'end');
  const s = a => seq(a, 1425, 13, 640);
  o += hist(s([450,464,445,428,371,385,425,421,397,338,317,225,100,100,136,37,34,20,143,197,250,281,296,352,457,492,523,511,478,450,386,380,403,430,403,307,302,311,278,343,361,350,404]), P(190), 2, 1425, 13, 43);
  o += trend(s([194,208,223,240,249,257,266,278,284,287,290,288,275,263,254,242,227,215,209,209,211,215,220,230,245,260,277,292,304,314,320,323,328,334,338,338,335,332,329,329,331,332,338]), GRN, RED, 2);
  o += trend(s([1024,1024,1024,1002,965,931,929,926,910,872,835,788,751,748,751,722,674,641,620,610,617,644,680,730,779,797,797,794,782,758,724,724,770,818,845,860,877,913,938,964,979,968,965]), GRN, RED, 3, GRN);
  o += trend(s([880,827,805,808,791,779,827,895,916,850,775,713,667,667,715,763,767,743,773,843,898,931,929,935,946,950,932,898,862,823,773,752,787,853,892,848,787,767,787,835,875,890,886]), BLU, RED, 2);
  o += line(s([785,799,829,800,740,795,943,949,860,755,713,667,620,710,829,755,716,763,840,925,925,940,920,940,979,925,890,883,820,775,727,757,878,922,880,746,730,824,808,880,940,850,869]), '#222', 1);
  o += T(1415, P(28), 'TDMACD($EURUSD (200 Tick),5,20,30)') + T(1415, P(622), 'TDStochastics($EURUSD (200 Tick),3,5,2), TDSMA(TDStochastics($EURUSD (200 Tick),3,5,2).K,50)') + T(1415, P(1036), '© 2012 NinjaTrader, LLC');
  o += H(1368, 2068, 631, '#000') + H(1368, 2068, 829, '#000') + V(L, 60, 991, '#000') + V(R, 60, 991, '#000') + H(L, R, 991, '#000');
  for (let i = 0; i < 22; i++) { const y = Y(231 + i * 76.3); o += H(R, R + 5, y, '#000') + T(2000, y, (1.3128 - i * .0002).toFixed(4)); }
  [['0.0001', 41], ['0.00005', 116], ['0', 191], ['-0.00005', 266], ['-0.0001', 341], ['-0.00015', 416], ['-0.0002', 490], ['50', 614], ['45', 770], ['40', 926]].forEach(a => o += H(R, R + 5, P(a[1]), '#000') + T(2000, P(a[1]), a[0]));
  [['100', 620], ['80', 692], ['60', 764], ['40', 836], ['20', 908], ['0', 979]].forEach(a => o += H(L - 5, L, P(a[1]), '#000') + T(1406, P(a[1]), a[0], '#000', 'end'));
  o += ltag(1412, P(888), '26.10', BLU) + ltag(1412, P(866), '31.25', '#000');
  [['1.31225', 437, BLU], ['1.31150', 722, '#ff0', '#000'], ['1.31107', 884, GRN], ['1.31075', 1009, MAG], ['1.31081', 983, RED], ['1.3109', 950, '#ffc0cb', '#000'], ['1.31057', 1077, BLU], ["1.3103'5", 1163, '#deb887', '#000'], ['1.31026', 1197, ORG, '#000'], ['1.3104', 1143, '#000'], ['1.30920', 1601, BLU], ["1.3099'5", 1314, CYN, '#000'], ["1.3092'5", 1581, CYN, '#000']].forEach(a => o += tag(1993.5, Y(a[1]), a[0], a[2], a[3]));
  o += tag(1993.5, P(335), '-0.0000973', RED) + tag(1993.5, P(404), '-0.000143', RED) + tag(1993.5, P(963), '38.71', GRN);
  o += times('08:26 08:27 08:28 08:30 08:31 08:34 08:36 08:38 08:41 08:43 08:46'.split(' '), 1425, 52, 991);
  document.getElementById('c200').innerHTML = o;
})();

/* ---- 1800 tick ---- */
(() => {
  const k = 2.24, ox = 2066, L = 2118.5, R = 2702.5, X = x => ox + x / k, Y = y => y / 3, P = y => 640 + y / 3;
  let o = '<clipPath id="clipC"><rect x="2118" y="56" width="584" height="936"/></clipPath>';
  o += profile('612,130 620,155 632,200 645,240 655,345 662,310 672,430 682,290 695,255 710,160 730,230 745,260 754,312 765,260 780,305 797,350 805,350 822,250 835,190 850,140 860,120 870,145 885,190 897,240 908,355 918,330 930,200 942,130 955,150 966,260 976,335 985,418 995,380 1005,310 1015,365 1025,300 1038,640 1048,450 1060,560 1075,520 1085,590 1095,500 1105,600 1115,560 1125,350 1130,125 1140,160 1150,190 1162,160 1172,260 1177,300 1190,250 1205,220 1218,130 1230,150 1240,160 1262,245 1275,200 1290,250 1300,210 1310,140 1320,125 1332,120', ox, k, 2119);
  for (let i = 0; i < 10; i++) o += V(2135 + i * 60, 64, 991, GRID);
  [307, 616, 925, 1233, 1540, 1849].forEach(y => o += H(L, R, Y(y), GRID));
  o += H(L, R, P(802), GRID) + H(L, R, P(445), '#999') + H(L, R, P(697), '#9acd32') + H(L, R, P(790), '#999') + H(L, R, P(829), '#999') + H(L, R, P(922), '#8b00d0');
  [['Ultimate Support/Resistance (8/8)', 268, 289, BLU], ['Weak, Stop and Reverse (7/8)', 582, 603, '#ff0'], ['Pivot, Reverse (6/8)', 897, 918, MAG], ['Top of Trading Range (5/8)', 1209, 1231, CYN], ['Major Support/Resistance Line (4/8)', 1524, 1546, BLU], ['Bottom of Trading Range (3/8)', 1837, 1858, CYN]].forEach(m => o += murrey(X(152), X(1408), Y(m[2]), m[3]) + T(X(159), Y(m[1]), m[0], '#707070'));
  o += candles(`r1088,1092,1075 r1090,1093,1084,1104 g1072,1091 g1055,1072 g1050,1054,1035 r1049,1070,1033 r1072,1094 g1080,1094 r1088,1106 r1108,1112,1098,1122 g1080,1106,1078,1118 g1071,1083 g1039,1069 r1040,1052 g1024,1053 g986,1024 r985,1003,970 g966,1003,960 r967,979 r979,982,973,995 g901,982,887 r903,906,893,918 r903,906,898,938 g895,902,885,930 r895,913 g862,913 g850,865 g826,851 g802,826,790 g784,802 r781,784,766,797 r781,811 r812,815,800,833 g790,817 g775,790 r778,799 r799,808 g778,808 g760,778 g740,760 r745,760 g730,775 r722,749 g698,748 g674,700,650 g649,676 g633,649,610 r633,648 r649,671,645,688 r670,673,640,685 g638,670,620 r640,670 r672,675 g655,676 r655,688 r690,695,672 r688,700,678`, 2135, 10, 6);
  o += trend(at('156,1060 200,1060 245,1057 335,1057 337,1058 447,1060 514,1055 604,1051 680,1043 760,1033 828,1015 940,988 1030,968 1096,945 1164,920 1253,882 1330,857 1410,832', ox, k, 0), GRN, RED, 3);
  o += line(at('156,1165 200,1156 250,1150 335,1143 447,1133 514,1127 604,1110 716,1090 828,1068 940,1043 1030,1023 1096,1010 1164,993 1231,978 1320,960 1387,950', ox, k, 0), GRN, 2);
  o += line(at('200,1084 230,1080 290,1075 380,1083 447,1073 492,1058 530,1040 560,1030 590,1018 620,1002 640,990 680,970 716,950 760,920 828,882 872,864 917,845 984,828 1050,800 1096,787 1141,765 1186,735 1253,712 1300,702 1343,693 1410,690', ox, k, 0), '#2222ee', 1);
  o += line(at('156,1426 245,1415 335,1399 380,1397 402,1390 514,1376 604,1360 716,1338 828,1313 962,1283 1096,1253 1231,1222 1320,1202 1387,1183', ox, k, 0), ORG, 2);
  o += H(X(147), X(1398), Y(1084), GRN, 3, '8 2') + H(X(147), X(1398), Y(1108), '#b22222', 3, '8 2') + H(X(147), X(1398), Y(1630), ORG, 3, '8 2');
  [['R2', 493, BLU], ['R1', 799, BLU], ['PP', 1390, '#000'], ['S1', 1696, RED]].forEach(a => o += H(X(938), X(1387), Y(a[1]), a[2]) + T(X(934), Y(a[1] + 2), a[0], a[2], 'end'));
  [[514, 907], [559, 902], [783, 728], [1074, 647], [1141, 586], [1365, 589], [1387, 613], [1410, 610]].forEach(a => o += arrow(X(a[0]), Y(a[1]), true));
  [[671, 935], [984, 826], [1275, 690], [537, 1023], [604, 1012], [1388, 710]].forEach(a => o += arrow(X(a[0]), Y(a[1]), false));
  [[662, 897, BLU, 1], [542, 968, BLU, 0], [552, 977, MAG, 1], [608, 962, BLU, 0], [788, 800, MAG, 0], [979, 790, BLU, 1], [1268, 629, BLU, 1], [1146, 680, MAG, 0], [1373, 688, MAG, 0], [510, 1000, MAG, 1]].forEach(a => o += tri(X(a[0]), Y(a[1]), a[2], a[3]));
  const t = 2555;
  o += H(t, 2688, Y(672), '#ffc0cb', 2) + H(t, R, Y(698), '#deb887', 2) + H(t, 2688, Y(719), CYN, 2) + H(t, 2688, Y(756), CYN, 2);
  o += pnl(t, Y(699)) + order(t, Y(674), '0.12M', 'Buy STP', '#add8e6') + order(t, Y(723), '0.06M', 'Buy LMT', '#0f0') + order(t, Y(760), '0.06M', 'Buy LMT', '#0f0');
  [672, 719, 757].forEach(y => o += kill(2694, Y(y)));
  o += T(2685, Y(1849), 'Ticks remaining = 100', '#000', 'end');
  o += `<g clip-path="url(#clipC)">${T(2121, 67, 'MurreyMath($EURUSD (1800 Tick),True,Daily), SMA($EURUSD (1800 Tick),100), SMA($EURUSD (1800 Tick),200), PriorDayOHLC($EURUSD (1800 Tick))')}</g>`;
  const s = a => seq(a, 2135, 10, 640);
  o += hist(s([505,494,463,440,406,409,442,447,482,499,481,456,406,391,354,295,284,244,239,244,170,135,124,121,148,121,98,77,50,26,19,60,102,115,115,151,192,181,170,181,166,154,186,154,124,89,62,73,121,157,151,199,235,241,283,312]), P(445), 2, 2135, 10, 56);
  o += trend(at('156,455 178,458 223,458 268,452 335,452 380,458 424,456 469,444 514,424 559,401 581,391 626,362 671,332 715,309 760,280 805,251 850,223 895,207 940,199 984,199 1051,194 1096,190 1141,185 1186,170 1231,160 1275,160 1320,166 1387,187', ox, k, 640), GRN, RED, 2);
  o += trend(s([994,997,996,998,1000,994,997,998,997,1008,1018,1024,1024,1019,1004,980,967,965,962,967,970,970,959,935,917,908,896,884,865,842,818,803,799,794,770,752,748,746,743,748,737,710,685,667,646,625,607,596,594,604,618,628,649,668,685,703]), GRN, RED, 3);
  o += trend(s([760,738,722,706,683,701,775,860,928,952,922,843,742,679,667,661,667,674,683,689,692,694,684,674,679,679,665,651,646,653,658,683,751,808,799,761,763,775,745,709,691,689,697,710,713,683,661,677,727,810,859,872,878,890,905,908]), BLU, RED, 2);
  o += line(s([715,763,689,665,685,745,887,940,949,970,845,709,658,664,680,641,685,695,664,710,703,673,676,670,694,673,626,650,661,653,658,735,859,833,713,743,838,745,662,725,695,653,751,725,658,667,664,703,810,916,848,848,938,880,892,952]), '#222', 1);
  o += T(2121, P(28), 'TDMACD($EURUSD (1800 Tick),5,20,30)') + T(2121, P(604), 'TDStochastics($EURUSD (1800 Tick),3,5,2), TDSMA(TDStochastics($EURUSD (1800 Tick),3,5,2).K,50)') + T(2121, P(1036), '© 2012 NinjaTrader, LLC');
  o += H(2076, 2759, 631, '#000') + H(2076, 2759, 823, '#000') + V(L, 60, 991, '#000') + V(R, 60, 991, '#000') + H(L, R, 991, '#000');
  for (let i = 0; i < 17; i++) { const y = Y(205 + i * 102.9); o += H(R, R + 5, y, '#000') + (i ? T(2711, y, (1.32 - i * .002).toFixed(4)) : ''); }
  [['70', 638], ['65', 720], ['60', 803], ['55', 885], ['50', 968], ['45', 1052]].forEach(a => o += H(R, R + 5, P(a[1]), '#000') + T(2711, P(a[1]), a[0]));
  [['100', 623], ['80', 698], ['60', 773], ['40', 848], ['20', 922], ['0', 998]].forEach(a => o += H(L - 5, L, P(a[1]), '#000') + T(2112, P(a[1]), a[0], '#000', 'end'));
  o += ltag(2117, P(905), '23.79', RED) + ltag(2117, P(950), '12.18', '#000');
  [['1.31835', 289, BLU], ['1.31438', 492, BLU], ['1.31225', 601, '#ff0', '#000'], ['1.31048', 690, BLU], ["1.3103'5", 695, '#deb887', '#000'], ['1.3109', 670, '#ffc0cb', '#000'], ["1.3099'5", 722, CYN, '#000'], ['1.3104', 696, '#000'], ["1.3092'5", 758, CYN, '#000'], ['1.30842', 798, BLU], ['1.30780', 831, GRN], ['1.30615', 915, MAG], ['1.30553', 948, GRN], ['1.30290', 1081, GRN], ['1.30245', 1107, '#b22222'], ['1.30094', 1182, ORG, '#000'], ['1.30005', 1230, CYN, '#000'], ['1.29693', 1389, '#000'], ['1.29395', 1541, BLU], ['1.29225', 1628, ORG, '#000'], ['1.29097', 1695, RED], ['1.28785', 1857, CYN, '#000']].forEach(a => o += tag(2703.5, Y(a[1]), a[0], a[2], a[3]));
  o += tag(2703.5, P(185), '0.00114', RED) + tag(2703.5, P(311), '0.000577', RED) + tag(2703.5, P(702), '65.93', RED);
  o += times('05:37 06:11 06:34 06:52 07:07 07:20 07:39 08:01 08:14 08:36'.split(' '), 2135, 60, 991);
  document.getElementById('c1800').innerHTML = o;
})();
</script>
</body>
</html>
